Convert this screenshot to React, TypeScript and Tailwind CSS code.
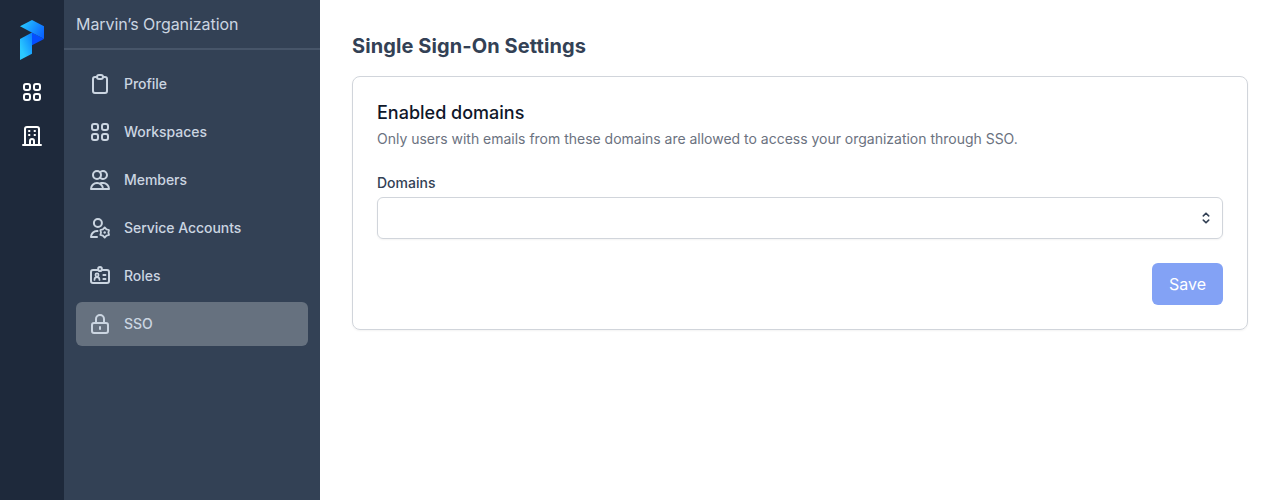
import type { ReactNode } from 'react';

function Icon({ children }: { children: ReactNode }) {
  return (
    <svg
      viewBox="0 0 24 24"
      fill="none"
      stroke="currentColor"
      strokeWidth="2"
      strokeLinecap="round"
      strokeLinejoin="round"
      className="size-6 shrink-0"
    >
      {children}
    </svg>
  );
}

const Clipboard = () => (
  <Icon>
    <path d="M9 5H7a2 2 0 0 0-2 2v12a2 2 0 0 0 2 2h10a2 2 0 0 0 2-2V7a2 2 0 0 0-2-2h-2" />
    <rect x="9" y="3" width="6" height="4" rx="2" />
  </Icon>
);

const Grid = () => (
  <Icon>
    <rect x="4" y="4" width="6" height="6" rx="2" />
    <rect x="14" y="4" width="6" height="6" rx="2" />
    <rect x="4" y="14" width="6" height="6" rx="2" />
    <rect x="14" y="14" width="6" height="6" rx="2" />
  </Icon>
);

const Users = () => (
  <Icon>
    <circle cx="9" cy="7" r="4" />
    <path d="M12 4.350a4 4 0 1 1 0 5.300" />
    <path d="M9 15a6 6 0 0 0-6 6h12a6 6 0 0 0-6-6zM13 15h2a6 6 0 0 1 6 6h-6" />
  </Icon>
);

const UserCog = () => (
  <Icon>
    <circle cx="9.900" cy="7" r="4" />
    <path d="M9.500 15H9a6 6 0 0 0-6 6h6" />
    <path
      d="m16.700 11.500 1.850 1.800 2.480.7-.63 2.500.63 2.500-2.480.7-1.850 1.800-1.850-1.800-2.480-.7.630-2.500-.630-2.500 2.480-.7z"
      strokeWidth="1.800"
    />
    <circle cx="16.700" cy="16.500" r="1.200" fill="currentColor" stroke="none" />
  </Icon>
);

const IdCard = () => (
  <Icon>
    <path d="M10 6H5a2 2 0 0 0-2 2v9a2 2 0 0 0 2 2h14a2 2 0 0 0 2-2V8a2 2 0 0 0-2-2h-5" />
    <rect x="10.200" y="3" width="3.600" height="4" rx="1.800" />
    <path d="M15.300 11H17.500M15.300 15H17.500" strokeWidth="1.800" />
    <circle cx="9" cy="11" r="1.600" strokeWidth="1.700" />
    <path d="M6.500 16v-.3a2.500 2.500 0 0 1 5 0v.3" strokeWidth="1.700" />
  </Icon>
);

const Lock = () => (
  <Icon>
    <rect x="4" y="11" width="16" height="10" rx="2" />
    <path d="M8 11V7a4 4 0 0 1 8 0v4" />
    <path d="M12 14.300v3.400" strokeLinecap="butt" />
  </Icon>
);

const Building = () => (
  <Icon>
    <path d="M3 21h18M5 21V5a2 2 0 0 1 2-2h10a2 2 0 0 1 2 2v16M10 21v-4a2 2 0 0 1 4 0v4" />
    <path d="M9.250 7h.01M14.750 7h.01M9.250 11h.01M14.750 11h.01" strokeLinecap="square" />
  </Icon>
);

function Logo() {
  return (
    <svg viewBox="0 0 24 40" className="h-10 w-6" fill="none">
      <defs>
        <linearGradient id="top" x1="2" y1="3" x2="24" y2="15" gradientUnits="userSpaceOnUse">
          <stop stopColor="#26c6ff" />
          <stop offset="1" stopColor="#0a62ff" />
        </linearGradient>
        <linearGradient id="stem" x1="0" y1="26" x2="14" y2="20" gradientUnits="userSpaceOnUse">
          <stop stopColor="#2bc9ff" />
          <stop offset="1" stopColor="#0b83ff" />
        </linearGradient>
      </defs>
      <path d="M12 12.500v12.700l12-6.300z" fill="#044eff" />
      <path d="M0 6.300 12 0l12 6.300v12.600z" fill="url(#top)" />
      <path d="m0 18.900 12-6.400v21.200L0 40z" fill="url(#stem)" />
    </svg>
  );
}

const items = [
  { label: 'Profile', icon: <Clipboard /> },
  { label: 'Workspaces', icon: <Grid /> },
  { label: 'Members', icon: <Users /> },
  { label: 'Service Accounts', icon: <UserCog /> },
  { label: 'Roles', icon: <IdCard /> },
  { label: 'SSO', icon: <Lock />, active: true },
];

export default function App() {
  return (
    <div className="flex h-[500px] w-full bg-white font-['Inter',sans-serif]">
      <nav className="flex w-16 shrink-0 flex-col items-center bg-[#1e293b] pt-5 text-white">
        <Logo />
        <a className="mt-5"><Grid /></a>
        <a className="mt-5"><Building /></a>
      </nav>

      <aside className="w-64 shrink-0 bg-[#334155] text-[#cbd5e1]">
        <div className="h-[50px] border-b-2 border-[#475569] px-3 pt-3 leading-6 tracking-[-0.06px]">Marvin’s Organization</div>
        <ul className="flex flex-col gap-1 px-3 pt-3">
          {items.map((item) => (
            <li
              key={item.label}
              className={`flex h-11 items-center gap-3 rounded-md px-3 text-sm font-medium tracking-[-0.04px] ${item.active ? 'bg-[#66717f]' : ''}`}
            >
              {item.icon}
              {item.label}
            </li>
          ))}
        </ul>
      </aside>

      <main className="min-w-0 flex-1 px-8 pt-8">
        <h1 className="text-xl leading-7 font-bold tracking-[0.09px] text-[#334155]">Single Sign-On Settings</h1>
        <section className="mt-4 h-[254px] rounded-lg border border-[#d1d5db] p-6 shadow-xs">
          <h2 className="text-lg leading-6 font-medium text-[#0f172a]">Enabled domains</h2>
          <p className="mt-1 text-sm leading-5 tracking-[-0.013px] text-[#6b7280]">
            Only users with emails from these domains are allowed to access your organization through SSO.
          </p>
          <label className="mt-6 block text-sm leading-5 font-medium text-[#334155]">Domains</label>
          <button className="mt-1 flex h-[42px] w-full items-center justify-end rounded-md border border-[#d1d5db] pr-1.5 shadow-xs">
            <svg viewBox="0 0 20 20" className="size-5 text-[#334155]" fill="none" stroke="currentColor" strokeWidth="1.600" strokeLinecap="round" strokeLinejoin="round">
              <path d="m7.300 7.900 2.700-2.700 2.700 2.700M7.300 12.100l2.700 2.700 2.700-2.700" />
            </svg>
          </button>
          <div className="mt-6 flex justify-end">
            <button className="flex h-[42px] w-[71px] items-center justify-center rounded-md bg-[#83a2f5] text-base text-white">
              Save
            </button>
          </div>
        </section>
      </main>
    </div>
  );
}
